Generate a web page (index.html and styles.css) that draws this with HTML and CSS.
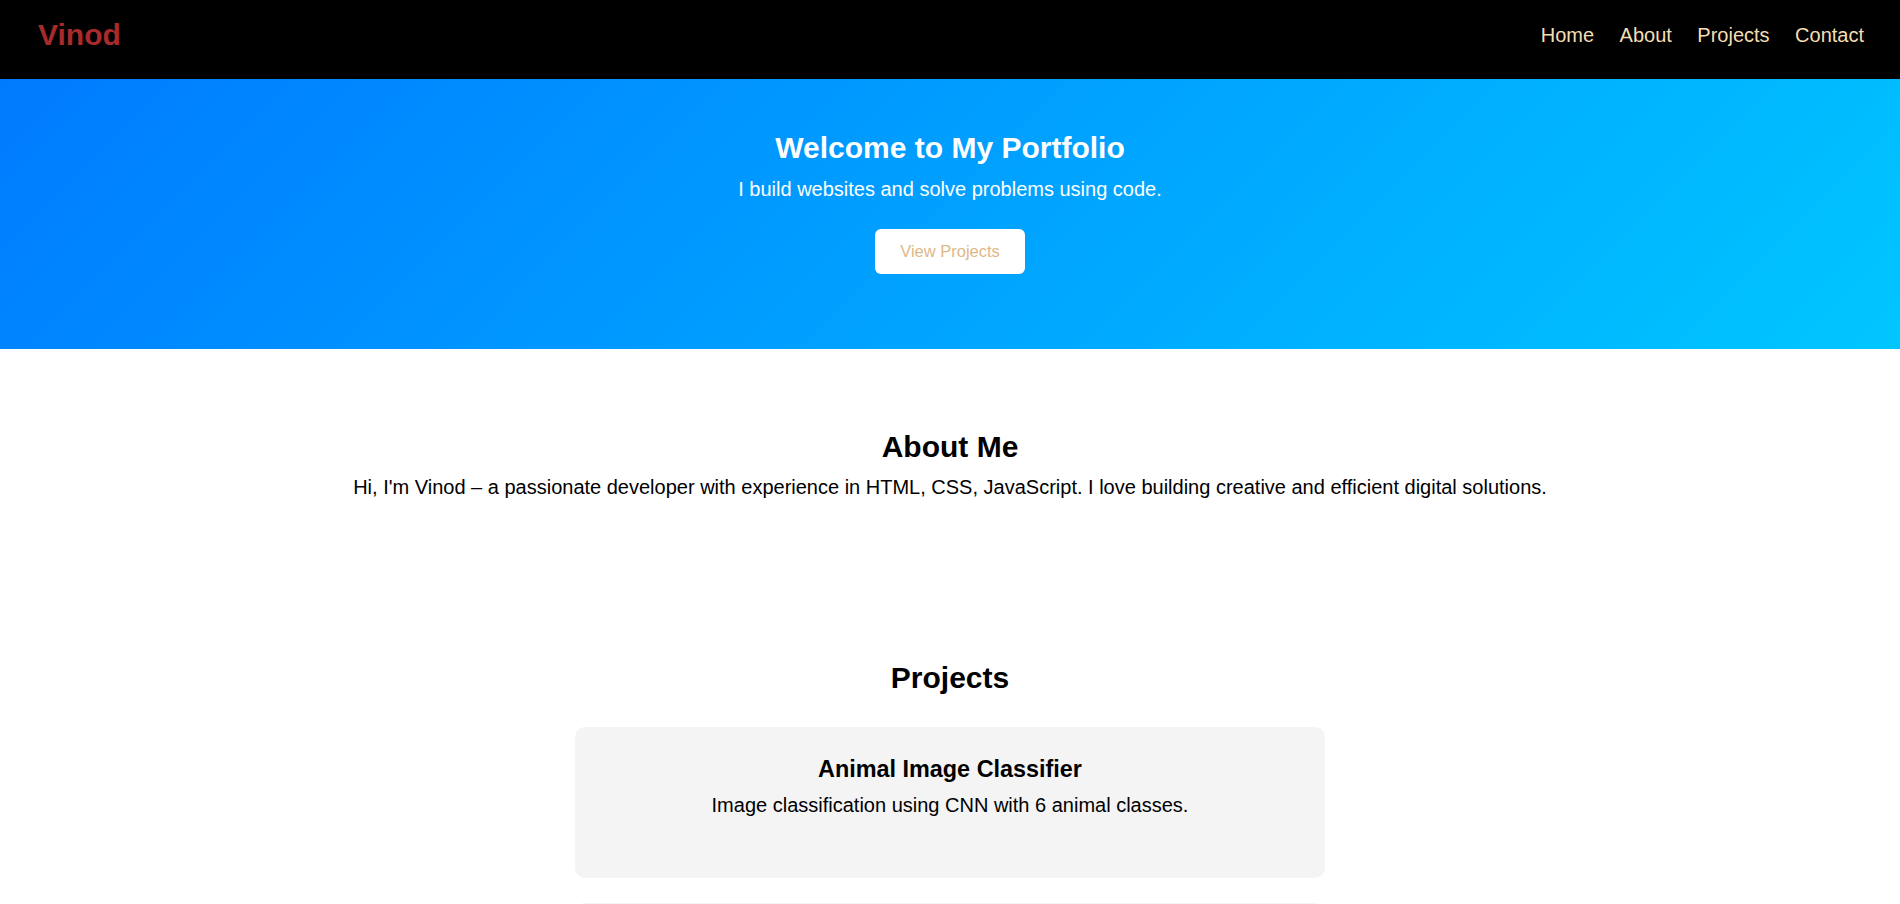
FILE: index.html
```html
<!DOCTYPE html>
<html lang="en">
<head>
<meta charset="UTF-8">
<title>Vinod | Portfolio</title>
<link rel="stylesheet" href="styles.css">
</head>
<body>
<header class="site-header">
  <div class="logo">Vinod</div>
  <nav class="nav">
    <a href="#home" class="nav-link">Home</a>
    <a href="#about" class="nav-link">About</a>
    <a href="#projects" class="nav-link">Projects</a>
    <a href="#contact" class="nav-link">Contact</a>
  </nav>
</header>

<section class="hero" id="home">
  <h2 class="hero-title">Welcome to My Portfolio</h2>
  <p class="hero-sub">I build websites and solve problems using code.</p>
  <a href="#projects" class="btn">View Projects</a>
</section>

<section class="section about" id="about">
  <h2 class="section-title">About Me</h2>
  <p class="section-text">Hi, I'm Vinod – a passionate developer with experience in HTML, CSS, JavaScript. I love building creative and efficient digital solutions.</p>
</section>

<section class="section projects" id="projects">
  <h2 class="section-title projects-title">Projects</h2>
  <div class="project-list">
    <div class="card">
      <h3 class="card-title">Animal Image Classifier</h3>
      <p class="card-text">Image classification using CNN with 6 animal classes.</p>
    </div>
    <div class="card">
      <h3 class="card-title">Portfolio Website</h3>
      <p class="card-text">A responsive personal website built with HTML and CSS.</p>
    </div>
  </div>
</section>
</body>
</html>
```

FILE: styles.css
```css
* {
  box-sizing: border-box;
}

body {
  margin: 0;
  font-family: "Liberation Sans", Arial, sans-serif;
  font-size: 20px;
  color: #000;
  background: #fff;
}

.site-header {
  display: flex;
  justify-content: space-between;
  align-items: center;
  height: 79px;
  padding: 18px 36px 26px 38px;
  background: #000;
}

.logo {
  font-size: 30px;
  font-weight: bold;
  color: #a82a2a;
  line-height: 34.5px;
}

.nav {
  display: flex;
  gap: 25.5px;
}

.nav-link {
  color: #f5deb3;
  text-decoration: none;
  font-size: 20px;
  line-height: 23px;
}

.hero {
  display: flex;
  flex-direction: column;
  align-items: center;
  padding: 52px 20px 75px;
  background: linear-gradient(135deg, #007bff, #00c6ff);
  color: #fff;
  text-align: center;
}

.hero-title {
  margin: 0 0 12px;
  font-size: 30px;
  line-height: 34.5px;
}

.hero-sub {
  margin: 0 0 28px;
  font-size: 20px;
  line-height: 23px;
}

.btn {
  display: inline-block;
  padding: 13px 25px;
  background: #fff;
  color: #deb887;
  border-radius: 6px;
  font-size: 16.5px;
  line-height: 19px;
  text-decoration: none;
}

.section {
  padding: 81px 20px;
  text-align: center;
}

.section-title {
  margin: 0 0 12px;
  font-size: 30px;
  line-height: 34.5px;
}

.projects-title {
  margin-bottom: 31px;
}

.section-text {
  margin: 0;
  font-size: 20px;
  line-height: 23px;
}

.project-list {
  display: flex;
  flex-direction: column;
  align-items: center;
  gap: 25px;
}

.card {
  width: 750px;
  padding: 29px 20px 61px;
  background: #f4f4f4;
  border-radius: 10px;
}

.card-title {
  margin: 0 0 11px;
  font-size: 23.4px;
  line-height: 27px;
}

.card-text {
  margin: 0;
  font-size: 20px;
  line-height: 23px;
}
```
